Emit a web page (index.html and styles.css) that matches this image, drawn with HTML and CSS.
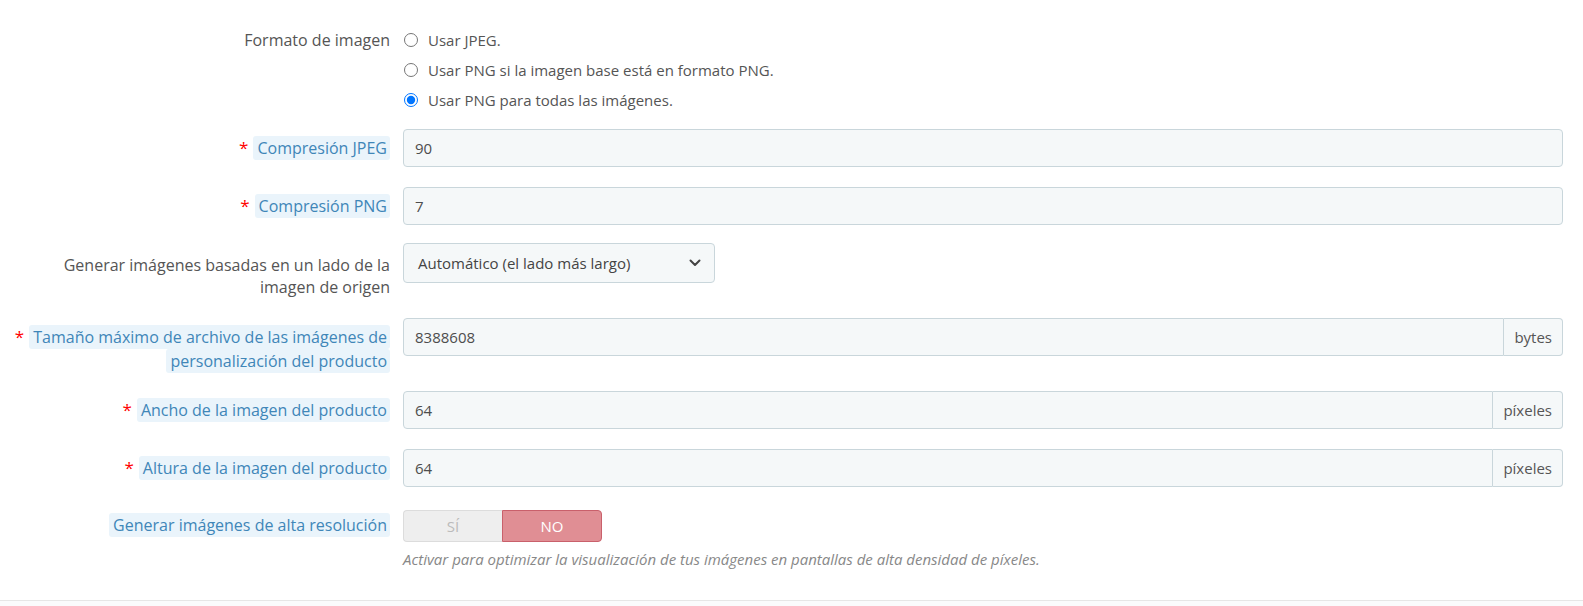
FILE: index.html
```html
<!DOCTYPE html>
<html lang="es">
<head>
<meta charset="utf-8">
<title>Imágenes</title>
<link rel="stylesheet" href="styles.css">
</head>
<body>
<div class="form">
  <div class="row row-radio">
    <div class="label plain radio-label">Formato de imagen</div>
    <div class="control">
      <label class="radio"><input type="radio" name="fmt"><span>Usar JPEG.</span></label>
      <label class="radio"><input type="radio" name="fmt"><span>Usar PNG si la imagen base está en formato PNG.</span></label>
      <label class="radio"><input type="radio" name="fmt" checked><span>Usar PNG para todas las imágenes.</span></label>
    </div>
  </div>

  <div class="row gap-20">
    <div class="label"><span class="req">*</span><span class="tip">Compresión JPEG</span></div>
    <div class="control"><div class="input">90</div></div>
  </div>

  <div class="row gap-18">
    <div class="label"><span class="req">*</span><span class="tip">Compresión PNG</span></div>
    <div class="control"><div class="input">7</div></div>
  </div>

  <div class="row gap-20">
    <div class="label plain two">Generar imágenes basadas en un lado de la imagen de origen</div>
    <div class="control">
      <div class="select">
        <span>Automático (el lado más largo)</span>
        <svg class="chev" width="12" height="8" viewBox="0 0 12 8"><path d="M1.5 1.5 L6 6 L10.5 1.5" fill="none" stroke="#444" stroke-width="2" stroke-linecap="round" stroke-linejoin="round"/></svg>
      </div>
    </div>
  </div>

  <div class="row gap-18">
    <div class="label two-tip"><span class="req">*</span><span class="tip">Tamaño máximo de archivo de las imágenes de personalización del producto</span></div>
    <div class="control"><div class="group"><div class="input">8388608</div><div class="addon">bytes</div></div></div>
  </div>

  <div class="row gap-20">
    <div class="label"><span class="req">*</span><span class="tip">Ancho de la imagen del producto</span></div>
    <div class="control"><div class="group"><div class="input">64</div><div class="addon">píxeles</div></div></div>
  </div>

  <div class="row gap-23">
    <div class="label"><span class="req">*</span><span class="tip">Altura de la imagen del producto</span></div>
    <div class="control"><div class="group"><div class="input">64</div><div class="addon">píxeles</div></div></div>
  </div>

  <div class="row last">
    <div class="label toggle-label"><span class="tip">Generar imágenes de alta resolución</span></div>
    <div class="control">
      <div class="toggle"><span class="yes">SÍ</span><span class="no">NO</span></div>
      <p class="help">Activar para optimizar la visualización de tus imágenes en pantallas de alta densidad de píxeles.</p>
    </div>
  </div>
</div>
<div class="footer"></div>
</body>
</html>
```

FILE: styles.css
```css
html, body {
  margin: 0;
  padding: 0;
  background: #fff;
}
body {
  font-family: "Open Sans", "Liberation Sans", sans-serif;
  font-size: 15px;
  color: #555;
}
.form {
  padding: 25px 20px 0 0;
  height: 600px;
  box-sizing: border-box;
}
.row {
  display: grid;
  grid-template-columns: 390px 1fr;
  column-gap: 13px;
  align-items: start;
}
.row-radio { margin-bottom: 14px; }
.gap-20 { margin-bottom: 20px; }
.gap-18 { margin-bottom: 18px; }
.gap-23 { margin-bottom: 23px; }

.label {
  text-align: right;
  font-size: 16px;
  line-height: 22px;
  padding-top: 8px;
  padding-left: 14px;
}
.label.plain { color: #555; }
.radio-label { padding-top: 4px; }
.label.two { padding-top: 11px; }
.label.two-tip { padding-top: 7px; line-height: 24px; }
.toggle-label { padding-top: 4px; }

.req {
  color: #f00;
  font-size: 17px;
  margin-right: 5px;
  vertical-align: top;
}
.tip {
  background: #eaf4fb;
  color: #4086b8;
  padding: 1px 3px 1px 4px;
  border-radius: 3px;
  -webkit-box-decoration-break: clone;
  box-decoration-break: clone;
}

.radio {
  display: flex;
  align-items: center;
  height: 30px;
  cursor: pointer;
}
.radio input {
  margin: 0 10px 0 1px;
  width: 14px;
  height: 14px;
  accent-color: #0075ff;
}

.input {
  height: 38px;
  box-sizing: border-box;
  border: 1px solid #c9d6db;
  border-radius: 4px;
  background: #f5f8f9;
  padding: 0 11px;
  display: flex;
  align-items: center;
  color: #4d4d4d;
}
.group {
  display: flex;
}
.group .input {
  flex: 1;
  border-radius: 4px 0 0 4px;
}
.addon {
  height: 38px;
  box-sizing: border-box;
  border: 1px solid #c9d6db;
  border-left: none;
  border-radius: 0 4px 4px 0;
  background: #f5f8f9;
  padding: 0 10px 0 10px;
  display: flex;
  align-items: center;
  color: #555;
}

.select {
  width: 312px;
  height: 40px;
  box-sizing: border-box;
  border: 1px solid #c9d6db;
  border-radius: 4px;
  background: #f5f8f9;
  padding: 0 14px;
  display: flex;
  align-items: center;
  justify-content: space-between;
  color: #444;
}
.chev { margin-right: -1px; }

.toggle {
  display: flex;
  width: 199px;
  height: 32px;
}
.toggle span {
  flex: 1;
  display: flex;
  align-items: center;
  justify-content: center;
  box-sizing: border-box;
}
.toggle .yes {
  background: #eeeeee;
  color: #bbb;
  border: 1px solid #dcdcdc;
  border-right: none;
  border-radius: 4px 0 0 4px;
}
.toggle .no {
  background: #e08e94;
  color: #fff;
  border: 1px solid #c9606b;
  border-radius: 0 4px 4px 0;
}
.help {
  margin: 8px 0 0;
  font-size: 15px;
  font-style: italic;
  color: #888;
  line-height: 18px;
}

.footer {
  border-top: 1px solid #e6e6e6;
  background: #fafbfc;
  height: 29px;
}
```
